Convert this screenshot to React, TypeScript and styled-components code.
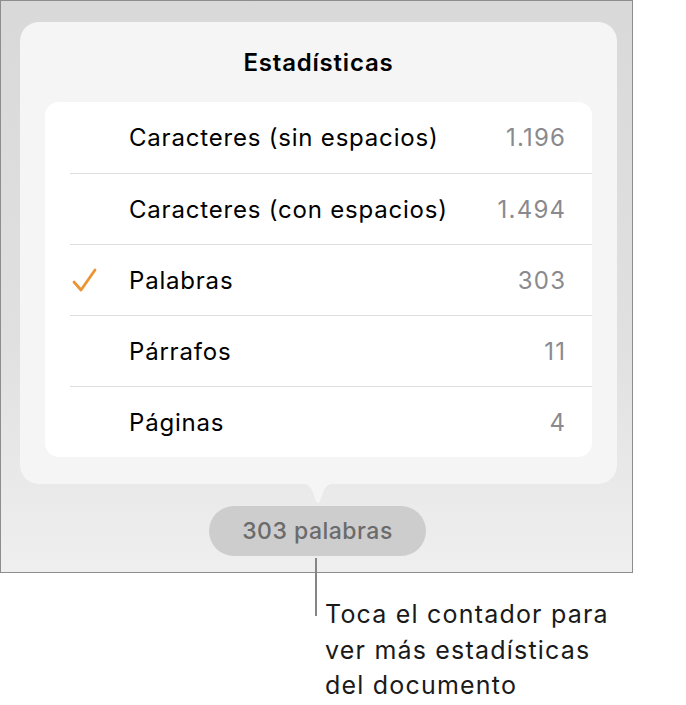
import React from 'react';
import styled, { createGlobalStyle } from 'styled-components';

const GlobalStyle = createGlobalStyle`
    html, body {
        margin: 0;
        padding: 0;
        background: #ffffff;
    }
    body {
        font-family: Inter, "Noto Sans", "Liberation Sans", sans-serif;
        -webkit-font-smoothing: antialiased;
    }
`;

const Page = styled.div`
    width: 686px;
    height: 705px;
    overflow: hidden;
`;

const Screen = styled.div`
    box-sizing: border-box;
    width: 633px;
    height: 573px;
    border: 1px solid #8d8d8d;
    background: linear-gradient(180deg, #d9d9d9 0%, #e0e0e0 60%, #efefef 100%);
    padding: 21px 0 0 19px;
    display: flex;
    flex-direction: column;
`;

const Popover = styled.div`
    position: relative;
    box-sizing: border-box;
    width: 597px;
    height: 462px;
    background: #f5f5f5;
    border-radius: 19px;
    padding: 0 25px;
    display: flex;
    flex-direction: column;

    &::after {
        content: '';
        position: absolute;
        left: 278px;
        bottom: -21px;
        width: 40px;
        height: 22px;
        background: #f5f5f5;
        clip-path: path('M0 0 C8 0 11 2 14 7 L18 18 Q20 22 22 18 L26 7 C29 2 32 0 40 0 Z');
    }
`;

const Title = styled.h2`
    margin: 0;
    height: 80px;
    display: flex;
    align-items: center;
    justify-content: center;
    box-sizing: border-box;
    font-size: 24px;
    font-weight: 600;
    color: #000;
    letter-spacing: 0.8px;
`;

const List = styled.ul`
    margin: 0;
    padding: 0;
    list-style: none;
    background: #ffffff;
    border-radius: 14px;
    overflow: hidden;
`;

const Row = styled.li<{ $first?: boolean }>`
    box-sizing: border-box;
    height: 71px;
    margin-left: 25px;
    padding-right: 27px;
    display: flex;
    align-items: center;
    border-top: ${(p) => (p.$first ? 'none' : '1px solid #dedede')};
    font-size: 24px;
    letter-spacing: 0.8px;
`;

const CheckSlot = styled.span`
    width: 59px;
    height: 30px;
    display: flex;
    align-items: center;
    flex-shrink: 0;
`;

const Label = styled.span`
    flex: 1;
    color: #000;
`;

const Value = styled.span`
    color: #8a8a8e;
    letter-spacing: 1.2px;
    margin-right: -1.2px;
`;

const Counter = styled.button`
    align-self: flex-start;
    margin: 22px 0 0 189px;
    width: 217px;
    height: 50px;
    border: none;
    border-radius: 25px;
    background: #cdcdcd;
    color: #6b6b6b;
    font-family: inherit;
    font-size: 23px;
    font-weight: 500;
    letter-spacing: 0.5px;
    cursor: pointer;
`;

const Callout = styled.div`
    display: flex;
    align-items: flex-start;
    padding-left: 315px;
`;

const Leader = styled.div`
    width: 2px;
    height: 58px;
    margin-top: -15px;
    background: #858585;
    flex-shrink: 0;
`;

const Note = styled.p`
    margin: 24px 0 0 8px;
    font-size: 25px;
    line-height: 35.5px;
    letter-spacing: 1.2px;
    color: #1a1a1a;
`;

const Check = () => (
    <svg width="30" height="30" viewBox="0 0 30 30">
        <path d="M4 17 L11 25 L25 5" fill="none" stroke="#ec9431" strokeWidth="2.8" strokeLinecap="round" strokeLinejoin="round" />
    </svg>
);

const stats = [
    { label: 'Caracteres (sin espacios)', value: '1.196', checked: false },
    { label: 'Caracteres (con espacios)', value: '1.494', checked: false },
    { label: 'Palabras', value: '303', checked: true },
    { label: 'Párrafos', value: '11', checked: false },
    { label: 'Páginas', value: '4', checked: false },
];

const App: React.FC = () => {
    return (
        <Page>
            <GlobalStyle />
            <Screen>
                <Popover>
                    <Title>Estadísticas</Title>
                    <List>
                        {stats.map((s, i) => (
                            <Row key={s.label} $first={i === 0}>
                                <CheckSlot>{s.checked && <Check />}</CheckSlot>
                                <Label>{s.label}</Label>
                                <Value>{s.value}</Value>
                            </Row>
                        ))}
                    </List>
                </Popover>
                <Counter>303 palabras</Counter>
            </Screen>
            <Callout>
                <Leader />
                <Note>
                    Toca el contador para
                    <br />
                    ver más estadísticas
                    <br />
                    del documento
                </Note>
            </Callout>
        </Page>
    );
};

export default App;
